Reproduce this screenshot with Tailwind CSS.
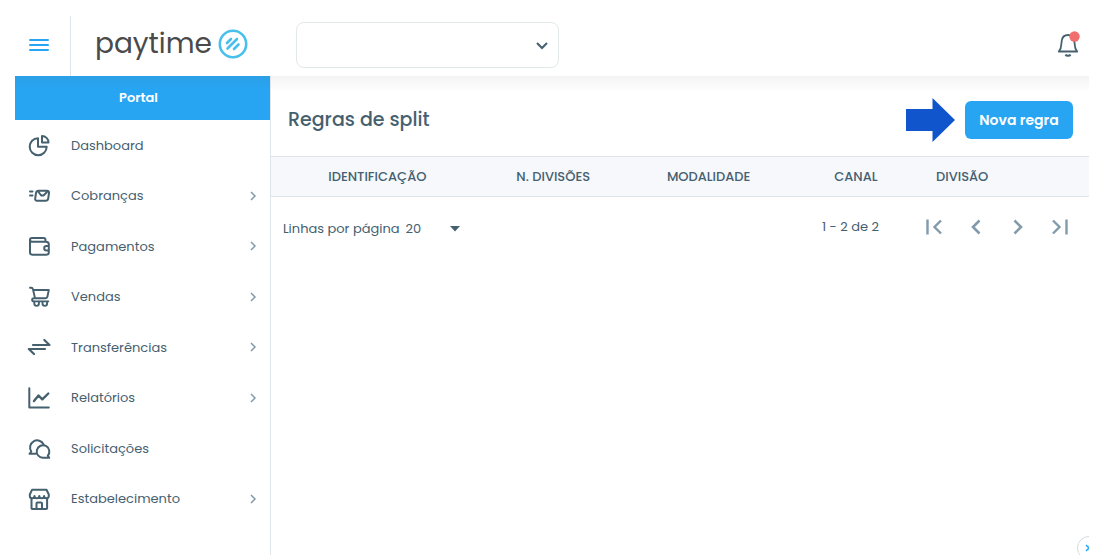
<!DOCTYPE html>
<html lang="pt-BR">
<head>
    <meta charset="UTF-8">
    <meta name="viewport" content="width=device-width, initial-scale=1.0">
    <title>Paytime - Regras de split</title>
    <script src="https://cdn.jsdelivr.net/npm/@tailwindcss/browser@4"></script>
</head>
<body class="bg-white text-[#45606f] font-['Poppins','Inter',sans-serif] h-screen overflow-hidden flex flex-col pt-4 pl-[15px] pr-4">

    <!-- Topo -->
    <header class="flex h-[60px] shrink-0 items-stretch">
        <button type="button" aria-label="Menu" class="w-14 shrink-0 border-r border-[#dfe5e9] flex items-center pl-[14px] text-[#27a5f2]">
            <svg class="w-5 h-4" viewBox="0 0 20 16" fill="none" stroke="currentColor" stroke-width="2" stroke-linecap="round"><path d="M1 2h18M1 7h18M1 12h18"/></svg>
        </button>
        <a href="#" class="w-[225px] shrink-0 flex items-center gap-[6px] pl-6 pb-1 text-[#4a4a4a]">
            <span class="text-[28px] leading-8">paytime</span>
            <svg class="size-[30px]" viewBox="0 0 30 30" fill="none" stroke="#49c0ea" stroke-linecap="round">
                <circle cx="15" cy="15" r="13.2" stroke-width="2.600"/>
                <path d="M9 14l4-4M9.500 19.500l9.500-9.500M16 20l4.500-4.500" stroke-width="2.600"/>
            </svg>
        </a>
        <div class="relative w-[263px] h-[46px] mt-[6px]">
            <select aria-label="Estabelecimento" class="appearance-none w-full h-full rounded-lg border border-[#e3e8ea] bg-white px-4 text-sm">
                <option></option>
            </select>
            <svg class="pointer-events-none absolute right-[11px] top-[17px] size-3" viewBox="0 0 12 12" fill="none" stroke="currentColor" stroke-width="2"><path d="M1 4l5 5 5-5"/></svg>
        </div>
        <button type="button" aria-label="Notificações" class="ml-auto mr-[9px] pb-1 flex items-center">
            <svg class="w-6 h-7" viewBox="0 0 24 28" fill="none" stroke="currentColor" stroke-width="1.800" stroke-linejoin="round">
                <path d="M2.800 21.500c1.500-1.700 2.400-4 2.400-6.500l.6-4.500C6.300 7 8.500 5 12 5s5.700 2 6.200 5.500l.6 4.500c0 2.500.9 4.800 2.400 6.500z"/>
                <path d="M9.500 24.500c.8 1.800 4.200 1.800 5 0" stroke-width="2"/>
                <circle cx="18.500" cy="6.500" r="5.200" fill="#f26d6d" stroke="none"/>
            </svg>
        </button>
    </header>

    <div class="flex flex-1 min-h-0">
        <!-- Menu lateral -->
        <nav class="w-64 shrink-0 border-r border-[#dfe5e9] text-[13px]">
            <h2 class="h-11 bg-linear-to-b from-[#2c9fe6] to-[#27a5f2] to-30% text-white text-[13px] font-semibold flex items-center justify-center pr-2">Portal</h2>
            <ul class="grid auto-rows-fr h-[404px]">
                <li>
                    <a href="#" class="h-full flex items-center gap-5 pl-3 pr-3">
                        <svg class="size-6" viewBox="0 0 24 24" fill="none" stroke="currentColor" stroke-width="2" stroke-linejoin="round"><path d="M11 5.200a8.500 8.500 0 1 0 8.700 8.600H11z"/><path d="M15 3v6.500h6.500A6.500 6.500 0 0 0 15 3z"/></svg>
                        <span>Dashboard</span>
                    </a>
                </li>
                <li>
                    <a href="#" class="h-full flex items-center gap-5 pl-3 pr-3">
                        <svg class="size-6" viewBox="0 0 24 24" fill="none" stroke="currentColor" stroke-width="2" stroke-linejoin="round" stroke-linecap="round"><path d="M3 7.500h2.500M3 11.500h2.500"/><path d="M11.500 6.700h8.500c1.500 0 2.300.9 2 2.300l-.8 5.600c-.2 1.300-1.200 2.200-2.700 2.200H10.200c-1.500 0-2.300-.9-2-2.200L9 9c.2-1.400 1.200-2.300 2.500-2.300zM11.500 8l2.300 3c.7.800 2.500.8 3.200 0L20 8"/></svg>
                        <span>Cobranças</span>
                        <svg class="ml-auto size-[10px] text-[#8099a8]" viewBox="0 0 10 10" fill="none" stroke="currentColor" stroke-width="1.500"><path d="M3 1l4 4-4 4"/></svg>
                    </a>
                </li>
                <li>
                    <a href="#" class="h-full flex items-center gap-5 pl-3 pr-3">
                        <svg class="size-6" viewBox="0 0 24 24" fill="none" stroke="currentColor" stroke-width="2" stroke-linejoin="round" stroke-linecap="round"><path d="M18.500 7.500V6c0-1.200-.8-2-2-2H5C3.800 4 3 4.800 3 5.800s.8 1.900 2 1.900h14c1.800 0 2.800 1 2.800 2.500v8c0 1.700-1 2.600-2.600 2.600H5.600C4 20.800 3 19.900 3 18.200V5.800M21.800 12h-2.300c-1.300 0-2.300 1-2.300 2.200s1 2.200 2.300 2.200h2.300"/></svg>
                        <span>Pagamentos</span>
                        <svg class="ml-auto size-[10px] text-[#8099a8]" viewBox="0 0 10 10" fill="none" stroke="currentColor" stroke-width="1.500"><path d="M3 1l4 4-4 4"/></svg>
                    </a>
                </li>
                <li>
                    <a href="#" class="h-full flex items-center gap-5 pl-3 pr-3">
                        <svg class="size-6" viewBox="0 0 24 24" fill="none" stroke="currentColor" stroke-width="1.900" stroke-linejoin="round" stroke-linecap="round"><path d="M3 2.800h1.300c.9 0 1.400.4 1.600 1.200L8 13.200M6.200 5h15.600l-1.400 6.800c-.2.900-.8 1.400-1.700 1.400H6.800c-1 0-1.700.7-1.700 1.600s.7 1.600 1.700 1.600h14.500"/><path d="M7.300 16.600v2a2.300 2.300 0 0 0 4.600 0v-2M15.500 16.600v2a2.300 2.300 0 0 0 4.600 0v-2"/></svg>
                        <span>Vendas</span>
                        <svg class="ml-auto size-[10px] text-[#8099a8]" viewBox="0 0 10 10" fill="none" stroke="currentColor" stroke-width="1.500"><path d="M3 1l4 4-4 4"/></svg>
                    </a>
                </li>
                <li>
                    <a href="#" class="h-full flex items-center gap-5 pl-3 pr-3">
                        <svg class="size-6" viewBox="0 0 24 24" fill="none" stroke="currentColor" stroke-width="2.200" stroke-linejoin="round" stroke-linecap="round"><path d="M6 10h16.500L17.300 5M18 14H1.800L7 19"/></svg>
                        <span>Transferências</span>
                        <svg class="ml-auto size-[10px] text-[#8099a8]" viewBox="0 0 10 10" fill="none" stroke="currentColor" stroke-width="1.500"><path d="M3 1l4 4-4 4"/></svg>
                    </a>
                </li>
                <li>
                    <a href="#" class="h-full flex items-center gap-5 pl-3 pr-3">
                        <svg class="size-6" viewBox="0 0 24 24" fill="none" stroke="currentColor" stroke-width="2" stroke-linejoin="round" stroke-linecap="round"><path d="M2.300 2.300v19.200h19.500"/><path d="M7 15l4.500-5.500 3.800 3.800 6-5.800" stroke-width="2.400"/></svg>
                        <span>Relatórios</span>
                        <svg class="ml-auto size-[10px] text-[#8099a8]" viewBox="0 0 10 10" fill="none" stroke="currentColor" stroke-width="1.500"><path d="M3 1l4 4-4 4"/></svg>
                    </a>
                </li>
                <li>
                    <a href="#" class="h-full flex items-center gap-5 pl-3 pr-3">
                        <svg class="size-6" viewBox="0 0 24 24" fill="none" stroke="currentColor" stroke-width="2" stroke-linejoin="round" stroke-linecap="round"><path d="M9 17.800H2.500l1.800-2.300A7.100 7.100 0 1 1 16.600 8.500"/><path d="M22.200 21.800h-6.400a6.300 6.300 0 1 1 5-2.200z"/></svg>
                        <span>Solicitações</span>
                    </a>
                </li>
                <li>
                    <a href="#" class="h-full flex items-center gap-5 pl-3 pr-3">
                        <svg class="size-6" viewBox="0 0 24 24" fill="none" stroke="currentColor" stroke-width="2" stroke-linejoin="round" stroke-linecap="round"><path d="M5 2.800h14.500l2.300 4.700v1.200c0 1.500-1 2.600-2.400 2.600-1.300 0-2.300-1-2.300-2.300 0 1.300-1.100 2.300-2.400 2.300S12.300 10.300 12.300 9c0 1.300-1.100 2.300-2.400 2.300S7.500 10.300 7.500 9c0 1.300-1 2.300-2.400 2.300-1.300 0-2.300-1.100-2.300-2.600V7.500z"/><path d="M4.500 11.500v9.700c0 .6.300.8.800.8h14c.5 0 .8-.3.800-.8v-9.700M9.500 22v-5.500c0-.7.400-1 1-1h3.500c.6 0 1 .3 1 1V22"/></svg>
                        <span>Estabelecimento</span>
                        <svg class="ml-auto size-[10px] text-[#8099a8]" viewBox="0 0 10 10" fill="none" stroke="currentColor" stroke-width="1.500"><path d="M3 1l4 4-4 4"/></svg>
                    </a>
                </li>
            </ul>
        </nav>

        <!-- Conteúdo -->
        <main class="relative flex-1 min-w-0 overflow-hidden">
            <div class="h-20 flex items-center pt-2 pl-[17px] pr-4 bg-linear-to-b from-[#f3f3f3] to-white to-20%">
                <h1 class="text-[19px] leading-7 font-medium">Regras de split</h1>
                <svg class="ml-auto mr-[10px] w-[49px] h-11" viewBox="0 0 49 44" fill="#1155cc"><path d="M0 11h26.500V0L49 22 26.500 44V33H0z"/></svg>
                <button type="button" class="w-[108px] h-[38px] rounded-md bg-[#27a5f2] text-white text-[14px] font-semibold">Nova regra</button>
            </div>

            <table class="w-full table-fixed">
                <colgroup>
                    <col class="w-[26%]">
                    <col class="w-[17%]">
                    <col class="w-[21%]">
                    <col class="w-[15%]">
                    <col class="w-[11%]">
                    <col class="w-[10%]">
                </colgroup>
                <thead>
                    <tr class="h-10 border-y border-[#dfe4ea] bg-[#f6f8fc] text-[13px]">
                        <th class="font-medium">IDENTIFICAÇÃO</th>
                        <th class="font-medium">N. DIVISÕES</th>
                        <th class="font-medium">MODALIDADE</th>
                        <th class="font-medium">CANAL</th>
                        <th class="font-medium">DIVISÃO</th>
                        <th></th>
                    </tr>
                </thead>
            </table>

            <div class="flex items-center h-[60px] pl-3 pr-2 text-[13px]">
                <label for="linhas" class="pt-1">Linhas por página</label>
                <div class="relative ml-[6px] pt-1">
                    <select id="linhas" class="appearance-none w-[60px] bg-transparent">
                        <option>20</option>
                    </select>
                    <svg class="pointer-events-none absolute right-[6px] top-[11px] w-[10px] h-[6px]" viewBox="0 0 10 6" fill="currentColor"><path d="M0 0h10L5 5.500z"/></svg>
                </div>
                <span class="ml-auto mr-[34px]">1 - 2 de 2</span>
                <div class="flex text-[#829bab]">
                    <button type="button" aria-label="Primeira página" class="w-[42px] h-8 flex items-center justify-center">
                        <svg class="size-4" viewBox="0 0 16 16" fill="none" stroke="currentColor" stroke-width="2.400"><path d="M1.500 .5v15M15 1.500L8.500 8l6.500 6.500"/></svg>
                    </button>
                    <button type="button" aria-label="Página anterior" class="w-[42px] h-8 flex items-center justify-center">
                        <svg class="size-4" viewBox="0 0 16 16" fill="none" stroke="currentColor" stroke-width="2.600"><path d="M11.500 1.500L5 8l6.500 6.500"/></svg>
                    </button>
                    <button type="button" aria-label="Próxima página" class="w-[42px] h-8 flex items-center justify-center">
                        <svg class="size-4" viewBox="0 0 16 16" fill="none" stroke="currentColor" stroke-width="2.600"><path d="M4.500 1.500L11 8l-6.500 6.500"/></svg>
                    </button>
                    <button type="button" aria-label="Última página" class="w-[42px] h-8 flex items-center justify-center">
                        <svg class="size-4" viewBox="0 0 16 16" fill="none" stroke="currentColor" stroke-width="2.400"><path d="M1 1.500L7.500 8 1 14.500M14.500 .5v15"/></svg>
                    </button>
                </div>
            </div>

            <button type="button" aria-label="Expandir" class="absolute -right-3 -bottom-[5px] size-6 rounded-full border border-[#d3dbe0] bg-white flex items-center justify-center text-[#27a5f2]">
                <svg class="size-2" viewBox="0 0 8 8" fill="none" stroke="currentColor" stroke-width="1.500"><path d="M1 1l3 3-3 3M4 1l3 3-3 3"/></svg>
            </button>
        </main>
    </div>

</body>
</html>
